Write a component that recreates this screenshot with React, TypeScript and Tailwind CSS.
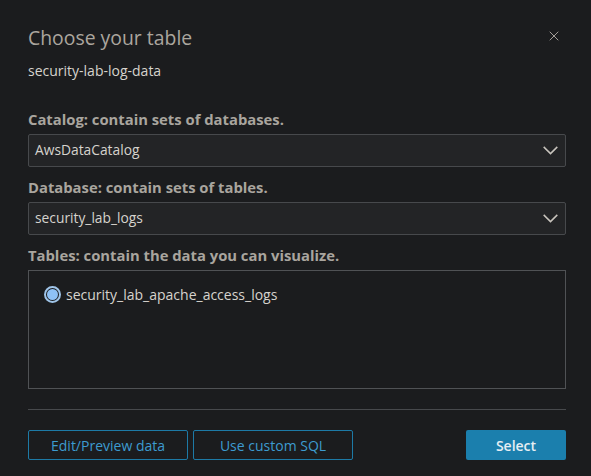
import { X } from 'lucide-react';

function Chevron() {
  return (
    <svg width="15" height="9" viewBox="0 0 15 9" fill="none" className="text-[#c8c4bd]">
      <path d="M0.7 0.9 L7.5 7.6 L14.3 0.9" stroke="currentColor" strokeWidth="1.5" />
    </svg>
  );
}

function Field({ label, value }: { label: string; value: string }) {
  return (
    <div className="flex flex-col">
      <p className="text-[14.8px] font-bold text-[#a9a59e] leading-[20px] mb-[5px]">{label}</p>
      <div className="h-[33px] flex items-center justify-between pl-[6px] pr-[7px] bg-[#232426] border border-[#47494c] rounded-[2px]">
        <span className="text-[13.8px] text-[#d6d3cd]">{value}</span>
        <Chevron />
      </div>
    </div>
  );
}

export default function App() {
  return (
    <main
      className="w-[591px] h-[476px] bg-[#1b1c1e] pl-[28px] pr-[25px] pt-[24px] relative"
      style={{ fontFamily: '"Open Sans", "Noto Sans", sans-serif' }}
    >
      {/* Header */}
      <button className="absolute right-[29px] top-[28px] text-[#b8b3ab]">
        <X className="w-[16px] h-[16px]" strokeWidth={1.3} />
      </button>
      <h1 className="text-[19.4px] leading-[28px] text-[#aba69e]">Choose your table</h1>
      <p className="mt-[9px] text-[14px] leading-[20px] text-[#d6d3cd]">security-lab-log-data</p>

      {/* Selects */}
      <div className="mt-[28px] flex flex-col gap-[10px]">
        <Field label="Catalog: contain sets of databases." value="AwsDataCatalog" />
        <Field label="Database: contain sets of tables." value="security_lab_logs" />
        <div className="flex flex-col">
          <p className="text-[14.8px] font-bold text-[#a9a59e] leading-[20px] mb-[5px]">
            Tables: contain the data you can visualize.
          </p>
          <div className="h-[119px] border border-[#505255] pl-[15px] pt-[13px]">
            <label className="flex items-center gap-[5px]">
              <span className="w-[17px] h-[17px] rounded-full border-[2px] border-[#9fc4e8] bg-[#1b1c1e] flex items-center justify-center">
                <span className="w-[11px] h-[11px] rounded-full bg-[#8ec1f5]" />
              </span>
              <span className="text-[14px] text-[#d6d3cd]">security_lab_apache_access_logs</span>
            </label>
          </div>
        </div>
      </div>

      {/* Footer */}
      <div className="mt-[20px] border-t border-[#47494c]" />
      <div className="mt-[20px] flex items-center">
        <button className="w-[160px] h-[30px] border border-[#1d7aa6] rounded-[2px] text-[14px] text-[#3d9bd0]">
          Edit/Preview data
        </button>
        <button className="ml-[5px] w-[160px] h-[30px] border border-[#1d7aa6] rounded-[2px] text-[14px] text-[#3d9bd0]">
          Use custom SQL
        </button>
        <button className="ml-auto w-[100px] h-[30px] bg-[#1b7fad] rounded-[2px] text-[14px] font-semibold text-[#e6eef3]">
          Select
        </button>
      </div>
    </main>
  );
}
